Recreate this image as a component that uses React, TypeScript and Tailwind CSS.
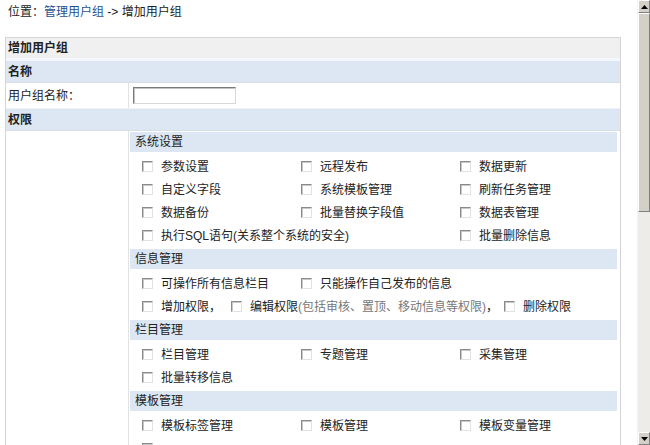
import * as React from "react";

type Item = { label: React.ReactNode; span?: number };

const SECTIONS: { title: string; rows: (Item | null)[][] }[] = [
  {
    title: "系统设置",
    rows: [
      [{ label: "参数设置" }, { label: "远程发布" }, { label: "数据更新" }],
      [{ label: "自定义字段" }, { label: "系统模板管理" }, { label: "刷新任务管理" }],
      [{ label: "数据备份" }, { label: "批量替换字段值" }, { label: "数据表管理" }],
      [{ label: "执行SQL语句(关系整个系统的安全)", span: 2 }, { label: "批量删除信息" }],
    ],
  },
  {
    title: "信息管理",
    rows: [[{ label: "可操作所有信息栏目" }, { label: "只能操作自己发布的信息" }]],
  },
  {
    title: "栏目管理",
    rows: [
      [{ label: "栏目管理" }, { label: "专题管理" }, { label: "采集管理" }],
      [{ label: "批量转移信息" }],
    ],
  },
  {
    title: "模板管理",
    rows: [
      [{ label: "模板标签管理" }, { label: "模板管理" }, { label: "模板变量管理" }],
      [{ label: "" }],
    ],
  },
];

function Box() {
  return (
    <span className="inline-block w-[11px] h-[11px] shrink-0 border-t border-l border-t-[#8a8a8a] border-l-[#8a8a8a] border-b border-r border-b-[#e2e2e2] border-r-[#e2e2e2] bg-white shadow-[inset_1px_1px_0_#c8c8c8]" />
  );
}

function Check({ children }: { children: React.ReactNode }) {
  return (
    <label className="flex items-center whitespace-nowrap">
      <Box />
      <span className="ml-[8px]">{children}</span>
    </label>
  );
}

function Section({ title, rows, extra }: { title: string; rows: (Item | null)[][]; extra?: React.ReactNode }) {
  return (
    <div>
      <div className="h-[20px] flex items-center pl-[5px] bg-[#dce7f3]">{title}</div>
      <div className="pt-[3px] pb-[2px] pl-[12px]">
        {rows.map((row, i) => (
          <div key={i} className="h-[23px] grid grid-cols-[159px_159px_1fr] items-center">
            {row.map((it, j) =>
              it ? (
                <div key={j} className={it.span === 2 ? "col-span-2" : ""}>
                  <Check>{it.label}</Check>
                </div>
              ) : (
                <div key={j} />
              )
            )}
          </div>
        ))}
        {extra}
      </div>
    </div>
  );
}

function Scrollbar() {
  const bevel = "border border-t-white border-l-white border-b-[#808080] border-r-[#808080] bg-[#d4d0c8]";
  return (
    <div className="w-[13px] h-[445px] flex flex-col bg-[#eeece8] border-l border-[#f4f3f0]">
      <div className={`h-[13px] flex items-center justify-center ${bevel}`}>
        <svg width="7" height="4" viewBox="0 0 7 4"><path d="M3.5 0L7 4H0z" fill="#000" /></svg>
      </div>
      <div className={`h-[199px] ${bevel}`} />
      <div className="flex-1" />
      <div className={`h-[13px] flex items-center justify-center ${bevel}`}>
        <svg width="7" height="4" viewBox="0 0 7 4"><path d="M0 0H7L3.5 4z" fill="#000" /></svg>
      </div>
    </div>
  );
}

export default function App() {
  const info = SECTIONS[1];
  return (
    <div className="flex w-[650px] h-[445px] overflow-hidden bg-white text-[12px] leading-[14px] text-[#222] font-['Liberation_Sans','Noto_Sans_CJK_SC',sans-serif]">
      <div className="flex-1 min-w-0 h-[445px] overflow-hidden">
        <div className="h-[24px] pl-[8px] pt-[5px]">
          位置：<a className="text-[#1f4f8f]">管理用户组</a> -&gt; 增加用户组
        </div>
        <div className="mt-[13px] ml-[5px] w-[616px] border border-[#d4d4d4]">
          <div className="h-[20px] flex items-center pl-[2px] bg-[#f0f0f0] font-bold">增加用户组</div>
          <div className="h-[3px] bg-[#f4f8fc]" />
          <div className="h-[22px] flex items-center pl-[2px] bg-[#dce7f3] border-b border-[#d6dde4] font-bold">名称</div>
          <div className="h-[26px] flex border-b border-[#eef2f6]">
            <div className="w-[123px] flex items-center pl-[2px] border-r border-[#e2e2e2]">用户组名称：</div>
            <div className="flex items-center pl-[4px]">
              <input className="w-[103px] h-[17px] border border-t-[#7a7a7a] border-l-[#7a7a7a] border-b-[#d8d8d8] border-r-[#d8d8d8] shadow-[inset_1px_1px_0_#c4c4c4] outline-none" />
            </div>
          </div>
          <div className="h-[22px] flex items-center pl-[2px] bg-[#dce7f3] border-b border-[#d6dde4] font-bold">权限</div>
          <div className="flex">
            <div className="w-[123px] shrink-0 border-r border-[#e2e2e2]" />
            <div className="flex-1 pl-[1px] pr-[3px] pt-[1px]">
              <Section {...SECTIONS[0]} />
              <Section
                title={info.title}
                rows={info.rows}
                extra={
                  <div className="h-[23px] flex items-center whitespace-nowrap">
                    <Check>增加权限，</Check>
                    <span className="ml-[10px]" />
                    <Check>
                      编辑权限<span className="text-[#777]">(包括审核、置顶、移动信息等权限)</span>，
                    </Check>
                    <span className="ml-[6px]" />
                    <Check>删除权限</Check>
                  </div>
                }
              />
              <Section {...SECTIONS[2]} />
              <Section {...SECTIONS[3]} />
            </div>
          </div>
        </div>
      </div>
      <Scrollbar />
    </div>
  );
}
